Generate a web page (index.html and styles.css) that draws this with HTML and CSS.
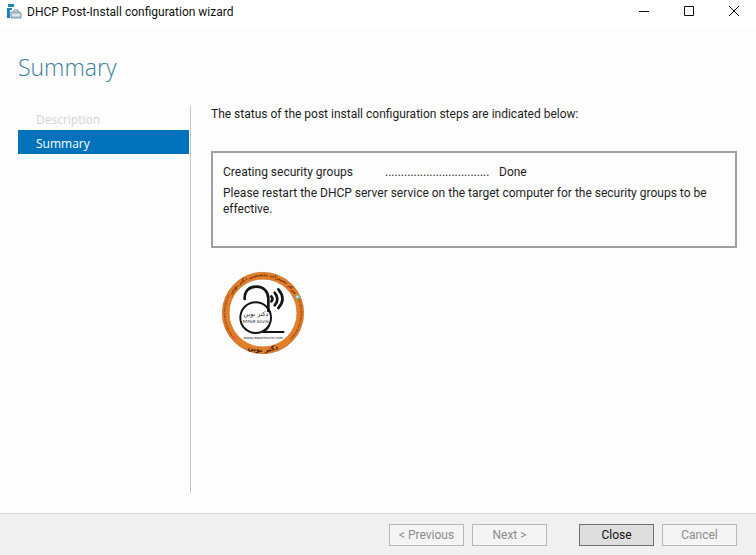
FILE: index.html
```html
<!DOCTYPE html>
<html lang="en">
<head>
<meta charset="utf-8">
<title>DHCP Post-Install configuration wizard</title>
<link rel="stylesheet" href="styles.css">
</head>
<body>
<div class="window">
  <header class="titlebar">
    <svg class="app-icon" width="16" height="16" viewBox="0 0 16 16" aria-hidden="true">
      <path d="M1 0h6v3H1zM0 4h5v2H3v8H0z" fill="#1b84bd"/>
      <path d="M7 8V6h4v2" fill="none" stroke="#7f99a7"/>
      <path d="M4 8h9l1 2v4H4z" fill="#b9cedb" stroke="#7893a3"/>
      <path d="M5 11h8" stroke="#fff"/>
    </svg>
    <span class="title">DHCP Post-Install configuration wizard</span>
    <div class="controls">
      <button type="button" aria-label="Minimize"><svg width="12" height="12" viewBox="0 0 12 12"><path d="M1 6.5h10"/></svg></button>
      <button type="button" aria-label="Maximize"><svg width="12" height="12" viewBox="0 0 12 12"><path d="M1.500 1.500h9v9h-9z"/></svg></button>
      <button type="button" aria-label="Close window"><svg width="12" height="12" viewBox="0 0 12 12"><path d="M1 1l10 10M11 1L1 11"/></svg></button>
    </div>
  </header>

  <div class="content">
    <h1>Summary</h1>
    <div class="columns">
      <nav class="steps">
        <a class="step disabled">Description</a>
        <a class="step active" href="#summary" aria-current="step">Summary</a>
      </nav>
      <main id="summary" class="main">
        <p class="intro">The status of the post install configuration steps are indicated below:</p>
        <section class="status">
          <div class="status-row">
            <span class="task">Creating security groups</span>
            <span class="dots">.................................</span>
            <span>Done</span>
          </div>
          <p>Please restart the DHCP server service on the target computer for the security groups to be effective.</p>
        </section>
        <svg class="badge" width="84" height="84" viewBox="18 10 252 252" role="img" aria-label="Repair Novin">
          <defs>
            <path id="arc-top" d="M34 136a110 110 0 0 1 220 0"/>
            <path id="arc-bottom" d="M27 136a117 117 0 0 0 234 0"/>
            <path id="arc-left" d="M56 210a115 115 0 0 1-14-128"/>
            <path id="arc-right" d="M247 84a115 115 0 0 1-21 132"/>
          </defs>
          <circle cx="144" cy="136" r="112" fill="#fff" stroke="#e27d28" stroke-width="21"/>
          <circle cx="144" cy="136" r="122" fill="none" stroke="#c57636" stroke-width="2"/>
          <circle cx="144" cy="136" r="102" fill="none" stroke="#d27a36" stroke-width="2"/>
          <g fill="none" stroke="#a8561f" stroke-width="5" stroke-dasharray="5 3 9 2">
            <use href="#arc-left"/>
            <use href="#arc-right"/>
          </g>
          <text class="ring-top"><textPath href="#arc-top" startOffset="50%">مرکز تعمیرات تخصصی دکتر نوین</textPath></text>
          <text class="ring-bottom"><textPath href="#arc-bottom" startOffset="50%">دکتر نوین</textPath></text>
          <g fill="none" stroke="#151515" stroke-width="8">
            <path d="M89 94C88 68 105 57 124 57c23 0 36 16 36 36v37" stroke-linecap="round"/>
            <circle cx="122" cy="150" r="46" stroke-width="6"/>
            <path d="M162 174c-3 8-9 14-20 19h66" stroke-width="6"/>
            <path d="M169 86q7 7 0 15M179 75q16 19 0 38M190 65q25 29 0 56" stroke-linecap="round"/>
          </g>
          <text class="logo-fa" x="123" y="145">دکتر نوین</text>
          <text class="logo-en" x="122" y="167">REPAIR NOVIN</text>
          <text class="logo-url" x="145" y="215">www.repairnovin.com</text>
          <circle cx="248" cy="88" r="7" fill="#69bcc4"/>
          <circle cx="247" cy="87" r="3" fill="#e9f5ee"/>
          <circle cx="59" cy="211" r="6" fill="#e8653c"/>
        </svg>
      </main>
    </div>
  </div>

  <footer class="footer">
    <button type="button" disabled>&lt; Previous</button>
    <button type="button" disabled>Next &gt;</button>
    <button type="button" class="close">Close</button>
    <button type="button" disabled>Cancel</button>
  </footer>
</div>
</body>
</html>
```
FILE: styles.css
```css
* {
  box-sizing: border-box;
}

body {
  margin: 0;
  background: #fdfdfd;
  color: #1e1e1e;
  font: 12px/16px Roboto, sans-serif;
}

h1,
p {
  margin: 0;
}

.window {
  display: flex;
  flex-direction: column;
  min-height: 100vh;
}

.titlebar {
  display: flex;
  align-items: center;
  height: 28px;
  padding: 0 0 0 7px;
  background: #fff;
}

.app-icon {
  margin-bottom: 4px;
}

.title {
  margin: 0 auto 4px 4px;
  color: #111;
}

.controls {
  display: flex;
}

.controls button {
  display: flex;
  align-items: center;
  justify-content: center;
  width: 45px;
  height: 28px;
  padding: 0 0 6px;
  border: 0;
  background: none;
}

.controls path {
  fill: none;
  stroke: #111;
}

.content {
  display: flex;
  flex: 1;
  flex-direction: column;
  padding: 22px 19px 20px 18px;
}

h1 {
  color: #3b7f9f;
  font: 300 23px/34px "Open Sans", sans-serif;
}

.columns {
  display: flex;
  flex: 1;
  margin-top: 22px;
}

.steps {
  flex: none;
  width: 173px;
  padding-right: 1px;
  border-right: 1px solid #c4c4c4;
}

.step {
  display: block;
  height: 24px;
  padding-left: 18px;
  color: #fff;
  font-family: "Open Sans", sans-serif;
  line-height: 27px;
  text-decoration: none;
}

.step.disabled {
  color: #d4d4d4;
}

.step.active {
  background: #0072bc;
}

.main {
  flex: 1;
  padding-left: 20px;
}

.status {
  min-height: 97px;
  margin-top: 29px;
  padding: 11px 10px;
  border: 2px solid #a0a0a0;
}

.status-row {
  display: flex;
  margin-bottom: 5px;
}

.task {
  width: 162px;
}

.dots {
  width: 114px;
}

.badge {
  display: block;
  margin: 23px 0 0 10px;
}

.badge text {
  fill: #222;
  font-family: "DejaVu Sans", sans-serif;
  text-anchor: middle;
}

.badge .ring-top {
  fill: #682e12;
  font-size: 14px;
  font-weight: bold;
}

.badge .ring-bottom {
  fill: #3c1b0c;
  font-size: 20px;
  font-weight: bold;
}

.badge .logo-fa {
  font-size: 19px;
}

.badge .logo-en {
  font-size: 11px;
}

.badge .logo-url {
  font-size: 11px;
}

.footer {
  display: flex;
  justify-content: flex-end;
  gap: 8px;
  padding: 10px 19px 9px;
  border-top: 1px solid #d5d5d5;
  background: #f0f0f0;
}

.footer button {
  width: 75px;
  height: 22px;
  padding: 0;
  border: 1px solid #b8b8b8;
  background: #f4f4f4;
  color: #8c8c8c;
  font: inherit;
}

.footer .close {
  margin-left: 24px;
  border-color: #707070;
  background: #dedede;
  color: #111;
}
```
